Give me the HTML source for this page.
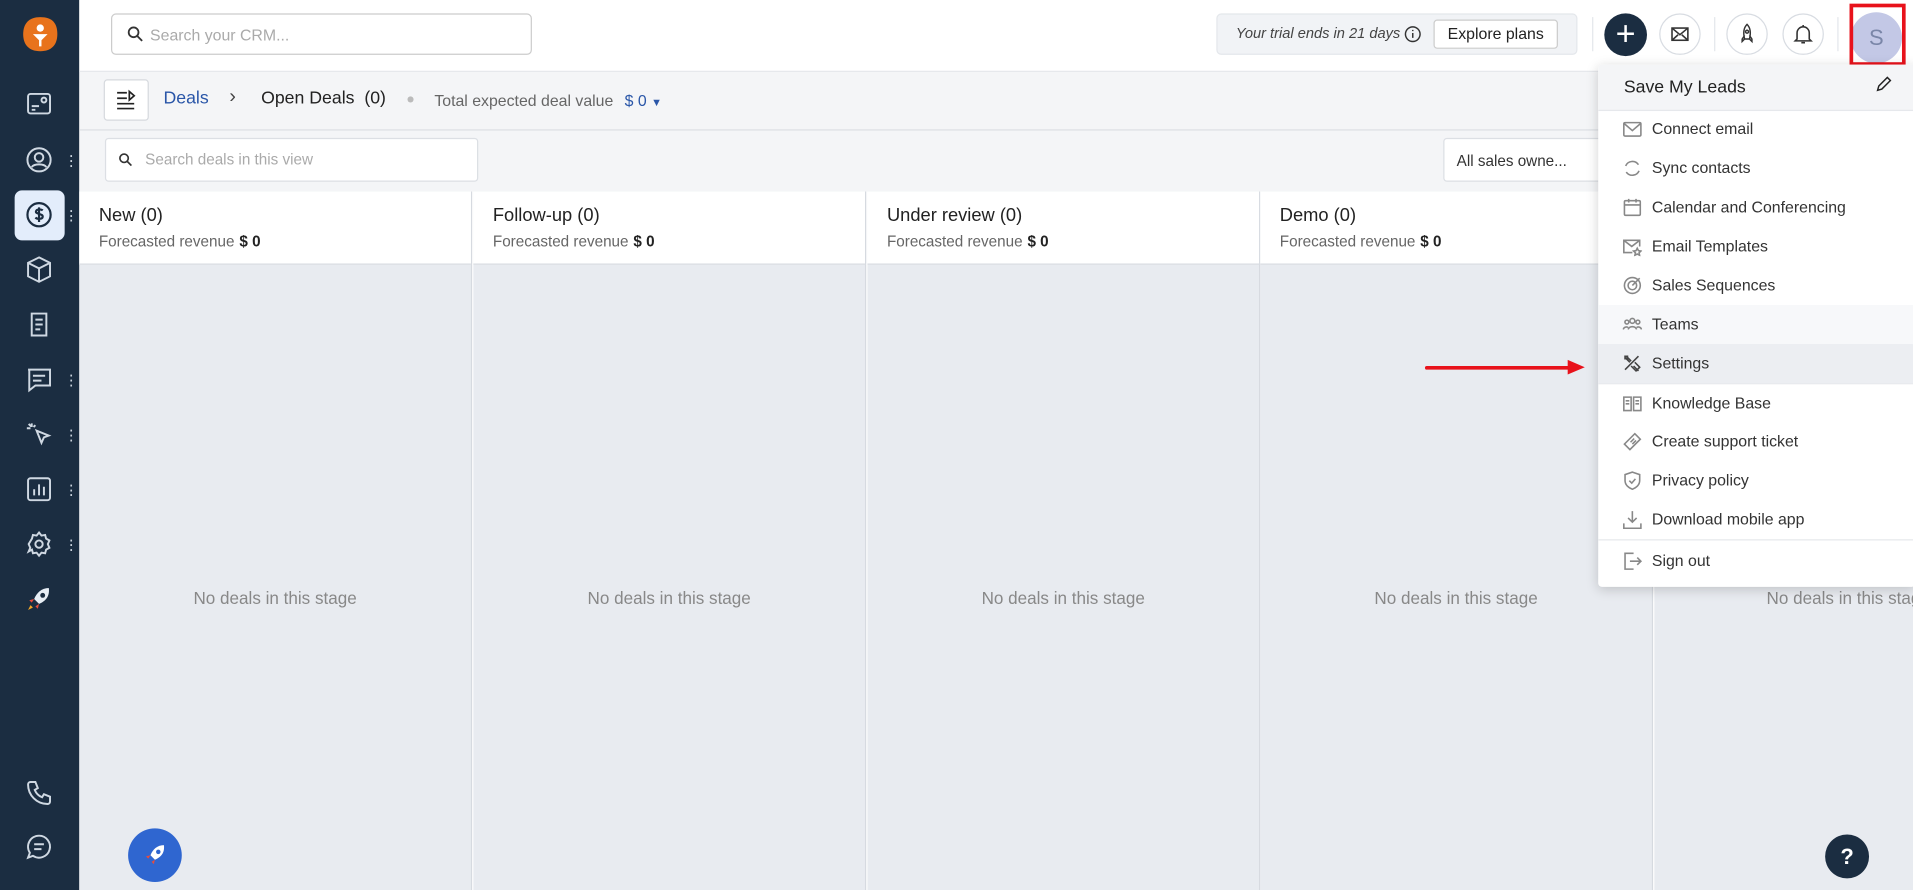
<!DOCTYPE html>
<html><head><meta charset="utf-8"><style>
*{box-sizing:border-box;margin:0;padding:0}
html,body{width:1913px;height:890px;overflow:hidden;background:#fff}
#w{width:1568px;height:730px;transform:scale(1.22);transform-origin:0 0;position:relative;font-family:"Liberation Sans",sans-serif;color:#222}
.a{position:absolute}
.sb{left:0;top:0;width:65px;height:730px;background:#1b2d41}
.ic{position:absolute;left:20px;width:24px;height:24px}
.dots{position:absolute;left:56px;width:3px;color:#c9d2dc;font-size:14px;line-height:4px;letter-spacing:0}
.t13{font-size:13px}
.col{position:absolute;top:157px;width:322px;height:573px;background:#e8ebf0;border-right:1px solid #d6dae0}
.ch{position:absolute;left:0;top:0;width:100%;height:60px;background:#fff;border-bottom:1px solid #d6dae0;padding:11px 16px}
.ch b{font-weight:normal;font-size:15px;color:#222;display:block}
.ch span{font-size:12.5px;color:#666;display:block;margin-top:6px}
.ch span i{font-style:normal;color:#222;font-weight:bold;margin-left:4px}
.nd{position:absolute;top:325px;width:100%;text-align:center;color:#888;font-size:14px}
.mi{position:absolute;left:0;width:258px;height:32px;font-size:13px;color:#333;padding-left:44px;line-height:32px}
.mi svg{position:absolute;left:20px;top:8px;width:16px;height:16px;fill:none;stroke:#888;stroke-width:1.3}
.circ{position:absolute;border:1px solid #d8dce2;border-radius:50%;width:34px;height:34px;top:11px;background:#fff}
</style></head><body><div id="w">
<div class="a sb"></div>
<!-- logo -->
<svg class="a" style="left:18px;top:13px" width="30" height="30" viewBox="0 0 30 30"><path d="M15 1 C25 1 29 6 29 15 C29 24 24 29 15 29 C6 29 1 24 1 15 C1 6 6 1 15 1Z" fill="#e8731c"/><circle cx="15" cy="10" r="3" fill="#fff"/><path d="M9 15h12l-5 5v5h-2v-5z" fill="#fff"/></svg>
<svg class="ic" style="top:73px" viewBox="0 0 24 24" fill="none" stroke="#cfd8e2" stroke-width="1.6"><rect x="3" y="4" width="18" height="16" rx="2"/><path d="M6 14h6M6 17h3"/><circle cx="16" cy="9" r="2"/></svg>
<svg class="ic" style="top:119px" viewBox="0 0 24 24" fill="none" stroke="#cfd8e2" stroke-width="1.6"><circle cx="12" cy="12" r="9.5"/><circle cx="12" cy="10" r="3.5"/><path d="M6 18c2-3 10-3 12 0"/></svg>
<div class="dots" style="top:125px">·<br>·<br>·</div>
<div class="a" style="left:12px;top:156px;width:41px;height:41px;background:#e3edfb;border-radius:6px"></div>
<svg class="ic" style="top:164px" viewBox="0 0 24 24" fill="none" stroke="#1b2d41" stroke-width="1.8"><circle cx="12" cy="12" r="9.5"/><path d="M15 8.5c-1-1-5-1.5-5.5.8s5.5 1.7 5.5 4.2-4.5 2.2-6 .8M12 6v12"/></svg>
<div class="dots" style="top:170px">·<br>·<br>·</div>
<svg class="ic" style="top:209px" viewBox="0 0 24 24" fill="none" stroke="#cfd8e2" stroke-width="1.6"><path d="M12 2l9 4.5v11L12 22l-9-4.5v-11zM3 6.5l9 4.5 9-4.5M12 11v11"/></svg>
<svg class="ic" style="top:254px" viewBox="0 0 24 24" fill="none" stroke="#cfd8e2" stroke-width="1.6"><path d="M6 3h12v18H6zM9 8h6M9 12h6M9 16h4"/></svg>
<svg class="ic" style="top:299px" viewBox="0 0 24 24" fill="none" stroke="#cfd8e2" stroke-width="1.6"><path d="M3 4h18v13H9l-5 4V4zM7 9h10M7 13h7"/></svg>
<div class="dots" style="top:305px">·<br>·<br>·</div>
<svg class="ic" style="top:344px" viewBox="0 0 24 24" fill="none" stroke="#cfd8e2" stroke-width="1.6"><path d="M10 9l10 4-4 1.5L14 19zM6 3v3M2 7h3M3.5 3.5l2 2M9 4.5L7.5 6"/></svg>
<div class="dots" style="top:350px">·<br>·<br>·</div>
<svg class="ic" style="top:389px" viewBox="0 0 24 24" fill="none" stroke="#cfd8e2" stroke-width="1.6"><rect x="3" y="3" width="18" height="18" rx="2"/><path d="M8 17v-5M12 17V8M16 17v-7"/></svg>
<div class="dots" style="top:395px">·<br>·<br>·</div>
<svg class="ic" style="top:434px" viewBox="0 0 24 24" fill="none" stroke="#cfd8e2" stroke-width="1.6"><circle cx="12" cy="12" r="3"/><path d="M12 2.5l2 2.5 3-.5.8 3 2.7 1.5-1.3 3 1.3 3-2.7 1.5-.8 3-3-.5-2 2.5-2-2.5-3 .5-.8-3L3.5 18l1.3-3-1.3-3L6.2 7.5l.8-3 3 .5z"/></svg>
<div class="dots" style="top:440px">·<br>·<br>·</div>
<svg class="ic" style="top:479px" viewBox="0 0 24 24"><path d="M20 3c-6 0-10 4-12 9l4 4c5-2 9-6 8-13z" fill="#e8eef5"/><circle cx="15" cy="9" r="2" fill="#1b2d41"/><path d="M8 12l-4 1 2 2zM12 16l-1 4-2-2z" fill="#e84c3d"/><path d="M5 17l-2 4 4-2z" fill="#f5a623"/></svg>
<svg class="ic" style="top:638px" viewBox="0 0 24 24" fill="none" stroke="#cfd8e2" stroke-width="1.6"><path d="M5 3h4l2 5-2.5 1.5a11 11 0 0 0 6 6L16 13l5 2v4a2 2 0 0 1-2 2A16 16 0 0 1 3 5a2 2 0 0 1 2-2z"/></svg>
<svg class="ic" style="top:682px" viewBox="0 0 24 24" fill="none" stroke="#cfd8e2" stroke-width="1.6"><path d="M12 3a9 9 0 1 1-5 16.5L3 21l1.5-4A9 9 0 0 1 12 3zM8 10h8M8 14h6"/></svg>

<!-- top bar -->
<div class="a" style="left:65px;top:0;width:1503px;height:58px;background:#fff"></div>
<div class="a" style="left:91px;top:11px;width:345px;height:34px;border:1px solid #ccc;border-radius:4px"></div>
<svg class="a" style="left:104px;top:21px" width="14" height="14" viewBox="0 0 14 14" fill="none" stroke="#333" stroke-width="1.5"><circle cx="5.5" cy="5.5" r="4"/><path d="M8.5 8.5l4 4"/></svg>
<div class="a t13" style="left:123px;top:21px;color:#aaa">Search your CRM...</div>
<div class="a" style="left:997px;top:11px;width:296px;height:34px;background:#f1f3f6;border:1px solid #e4e7eb;border-radius:4px"></div>
<div class="a" style="left:1013px;top:20px;font-size:12px;font-style:italic;color:#444">Your trial ends in 21 days</div>
<svg class="a" style="left:1151px;top:21px" width="14" height="14" viewBox="0 0 14 14" fill="none" stroke="#333" stroke-width="1.2"><circle cx="7" cy="7" r="6"/><path d="M7 6v4M7 3.5v1"/></svg>
<div class="a t13" style="left:1175px;top:16px;width:102px;height:24px;background:#fff;border:1px solid #ccc;border-radius:3px;text-align:center;line-height:22px;color:#222">Explore plans</div>
<div class="a" style="left:1305px;top:14px;width:1px;height:28px;background:#e4e7eb"></div>
<div class="a" style="left:1315px;top:11px;width:35px;height:35px;border-radius:50%;background:#1b2d41;color:#fff;font-size:28px;line-height:33px;text-align:center">+</div>
<div class="circ" style="left:1360px"></div>
<svg class="a" style="left:1369px;top:20px" width="16" height="16" viewBox="0 0 16 16" fill="none" stroke="#333" stroke-width="1.3"><rect x="1.5" y="3" width="13" height="10"/><path d="M1.5 3l6.5 5.5L14.5 3M1.5 13l5-4.5M14.5 13l-5-4.5"/></svg>
<div class="a" style="left:1405px;top:14px;width:1px;height:28px;background:#e4e7eb"></div>
<div class="circ" style="left:1415px"></div>
<svg class="a" style="left:1424px;top:19px" width="16" height="18" viewBox="0 0 16 18" fill="none" stroke="#333" stroke-width="1.2"><path d="M8 1c3 3 3 8 2 12H6C5 9 5 4 8 1zM6 10l-2 3v2l2-2M10 10l2 3v2l-2-2"/><circle cx="8" cy="7" r="1.2"/></svg>
<div class="circ" style="left:1461px"></div>
<svg class="a" style="left:1470px;top:19px" width="16" height="18" viewBox="0 0 16 18" fill="none" stroke="#333" stroke-width="1.3"><path d="M3 13V8a5 5 0 0 1 10 0v5l1.5 1.5h-13zM6.5 16h3M8 1.5v1.5"/></svg>
<div class="a" style="left:1506px;top:14px;width:1px;height:28px;background:#e4e7eb"></div>
<div class="a" style="left:1517px;top:10px;width:42px;height:42px;border-radius:50%;background:#c3c8e6;color:#7a86a8;font-size:18px;text-align:center;line-height:42px">S</div>
<div class="a" style="left:1516px;top:3px;width:46px;height:51px;border:3px solid #e8121b"></div>

<!-- subheader -->
<div class="a" style="left:65px;top:58px;width:1503px;height:99px;background:#f4f5f7;border-top:1px solid #e6e8ec"></div>
<div class="a" style="left:65px;top:106px;width:1503px;height:1px;background:#dcdfe4"></div>
<div class="a" style="left:85px;top:65px;width:37px;height:34px;background:#fff;border:1px solid #d6d9de;border-radius:3px"></div>
<svg class="a" style="left:95px;top:73px" width="17" height="17" viewBox="0 0 17 17" fill="none" stroke="#222" stroke-width="1.4"><path d="M1 3h8M1 7.5h8M1 12h14M1 16h14M11 2v7l4-3.5z"/></svg>
<div class="a" style="left:134px;top:73px;font-size:14.5px;color:#2a56a8">Deals</div>
<div class="a" style="left:188px;top:71px;font-size:16px;color:#444">›</div>
<div class="a" style="left:214px;top:73px;font-size:14.5px;color:#222">Open Deals&nbsp; (0)</div>
<div class="a" style="left:334px;top:79px;width:5px;height:5px;border-radius:50%;background:#bbb"></div>
<div class="a t13" style="left:356px;top:75px;color:#666">Total expected deal value</div>
<div class="a t13" style="left:512px;top:75px;color:#2a56a8">$ 0 <span style="font-size:9px">▼</span></div>
<div class="a" style="left:86px;top:113px;width:306px;height:36px;background:#fff;border:1px solid #dcdfe4;border-radius:3px"></div>
<svg class="a" style="left:97px;top:125px" width="12" height="12" viewBox="0 0 14 14" fill="none" stroke="#333" stroke-width="1.6"><circle cx="5.5" cy="5.5" r="4"/><path d="M8.5 8.5l4 4"/></svg>
<div class="a" style="left:119px;top:124px;font-size:12.5px;color:#aaa">Search deals in this view</div>
<div class="a" style="left:1183px;top:113px;width:140px;height:36px;background:#fff;border:1px solid #dcdfe4;border-radius:3px;font-size:12.5px;color:#333;padding:11px 10px">All sales owne...</div>

<!-- columns -->
<div class="col" style="left:65px"><div class="ch"><b>New (0)</b><span>Forecasted revenue<i>$ 0</i></span></div><div class="nd">No deals in this stage</div></div>
<div class="col" style="left:388px"><div class="ch"><b>Follow-up (0)</b><span>Forecasted revenue<i>$ 0</i></span></div><div class="nd">No deals in this stage</div></div>
<div class="col" style="left:711px"><div class="ch"><b>Under review (0)</b><span>Forecasted revenue<i>$ 0</i></span></div><div class="nd">No deals in this stage</div></div>
<div class="col" style="left:1033px"><div class="ch"><b>Demo (0)</b><span>Forecasted revenue<i>$ 0</i></span></div><div class="nd">No deals in this stage</div></div>
<div class="col" style="left:1356px;width:240px"><div class="ch"></div><div class="nd" style="text-align:left;left:92px">No deals in this stage</div></div>

<!-- dropdown -->
<div class="a" style="left:1310px;top:53px;width:260px;height:428px;background:#fff;box-shadow:0 2px 10px rgba(0,0,0,.18);border-radius:3px;overflow:hidden">
<div class="a" style="left:0;top:0;width:260px;height:38px;background:#f4f5f7;border-bottom:1px solid #e6e8ec"></div>
<div class="a" style="left:21px;top:11px;font-size:14.5px;color:#222">Save My Leads</div>
<svg class="a" style="left:227px;top:9px" width="14" height="14" viewBox="0 0 14 14" fill="none" stroke="#222" stroke-width="1.2"><path d="M2 12l1-3.5L10 1.5l2.5 2.5-7 7z"/></svg>
<div class="mi" style="top:37px"><svg viewBox="0 0 16 16"><rect x="1" y="2.5" width="14" height="11" rx="1"/><path d="M1 3l7 6 7-6"/></svg>Connect email</div>
<div class="mi" style="top:69px"><svg viewBox="0 0 16 16"><path d="M13 5a6 6 0 0 0-10.5 1M3 11a6 6 0 0 0 10.5-1"/></svg>Sync contacts</div>
<div class="mi" style="top:101px"><svg viewBox="0 0 16 16"><rect x="1.5" y="2.5" width="13" height="12" rx="1"/><path d="M1.5 6h13M5 1v3M11 1v3"/></svg>Calendar and Conferencing</div>
<div class="mi" style="top:133px"><svg viewBox="0 0 16 16"><path d="M14 8V3H1v10h7M1 3l6.5 5L14 3"/><path d="M12 9.5l1 2 2 .3-1.5 1.4.4 2-1.9-1-1.9 1 .4-2L9 11.8l2-.3z"/></svg>Email Templates</div>
<div class="mi" style="top:165px"><svg viewBox="0 0 16 16"><circle cx="8" cy="8" r="6.5"/><circle cx="8" cy="8" r="3.5"/><path d="M8 8l6-6"/></svg>Sales Sequences</div>
<div class="mi" style="top:197px;background:#f7f8fa"><svg viewBox="0 0 16 16"><circle cx="8" cy="5" r="2"/><circle cx="3.5" cy="6" r="1.6"/><circle cx="12.5" cy="6" r="1.6"/><path d="M4.5 12c1-3 6-3 7 0M0.5 12c.5-2 3-2.5 4-1.5M15.5 12c-.5-2-3-2.5-4-1.5"/></svg>Teams</div>
<div class="mi" style="top:229px;background:#eceef2"><svg viewBox="0 0 16 16" style="stroke:#444"><path d="M3 2l4 4M2 3l4 4M2 13L13 2M13 14l-4-4M10 7l4 4-3 3-4-4M2 2h2v2H2z"/></svg>Settings</div>
<div class="a" style="left:0;top:261px;width:260px;height:1px;background:#e6e8ec"></div>
<div class="mi" style="top:262px"><svg viewBox="0 0 16 16"><path d="M1 2.5h6v11H1zM9 2.5h6v11H9zM2.5 5.5h3M2.5 8h3M10.5 5.5h3M10.5 8h3"/></svg>Knowledge Base</div>
<div class="mi" style="top:293px"><svg viewBox="0 0 16 16"><path d="M10 1.5l4.5 4.5-8.5 8.5L1.5 10zM6.5 8.5l3-3M8 10l3-3"/></svg>Create support ticket</div>
<div class="mi" style="top:325px"><svg viewBox="0 0 16 16"><path d="M8 1l6 2v5c0 3.5-3 6-6 7-3-1-6-3.5-6-7V3z"/><path d="M5.5 8l2 2 3-3.5"/></svg>Privacy policy</div>
<div class="mi" style="top:357px"><svg viewBox="0 0 16 16"><path d="M8 1v9M4.5 6.5L8 10l3.5-3.5M1 11v4h14v-4"/></svg>Download mobile app</div>
<div class="a" style="left:0;top:389px;width:260px;height:1px;background:#e6e8ec"></div>
<div class="mi" style="top:391px"><svg viewBox="0 0 16 16"><path d="M9 1.5H2v13h7M6 8h9M12 5l3 3-3 3"/></svg>Sign out</div>
</div>

<!-- red arrow -->
<div class="a" style="left:1168px;top:300px;width:120px;height:3px;background:#e8121b;border-radius:2px"></div>
<div class="a" style="left:1285px;top:295px;width:0;height:0;border-left:14px solid #e8121b;border-top:6px solid transparent;border-bottom:6px solid transparent"></div>

<!-- floating buttons -->
<div class="a" style="left:105px;top:679px;width:44px;height:44px;border-radius:50%;background:#2f66d0"></div>
<svg class="a" style="left:116px;top:690px" width="22" height="22" viewBox="0 0 24 24"><path d="M20 3c-6 0-10 4-12 9l4 4c5-2 9-6 8-13z" fill="#fff"/><circle cx="15" cy="9" r="2" fill="#2f66d0"/><path d="M8 12l-4 1 2 2zM12 16l-1 4-2-2z" fill="#e84c3d"/></svg>
<div class="a" style="left:1496px;top:684px;width:36px;height:36px;border-radius:50%;background:#1b2d41;color:#fff;font-size:18px;font-weight:bold;text-align:center;line-height:36px">?</div>
</div></body></html>
